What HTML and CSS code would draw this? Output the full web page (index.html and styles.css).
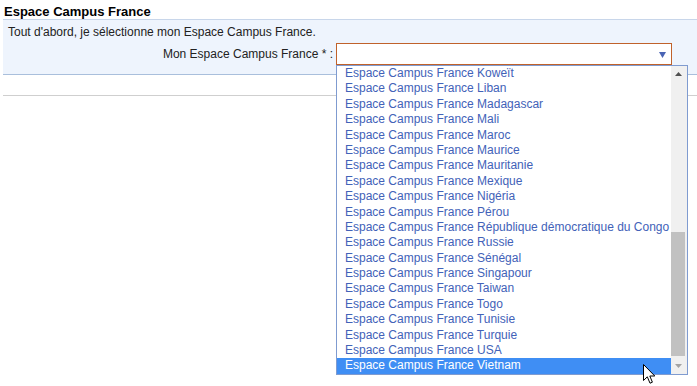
FILE: index.html
```html
<!DOCTYPE html>
<html lang="fr">

<head>
    <meta charset="UTF-8">
    <title>Espace Campus France</title>
    <link rel="stylesheet" href="styles.css">
</head>

<body>
    <div class="page">
        <h1 class="title">Espace Campus France</h1>
        <div class="panel">
            <p class="intro">Tout d'abord, je sélectionne mon Espace Campus France.</p>
            <div class="row">
                <label class="row-label">Mon Espace Campus France * :</label>
                <div class="select-wrap">
                    <div class="select">
                        <svg class="select-arrow" width="7" height="6" viewBox="0 0 7 6">
                            <path d="M0 0 H7 L3.5 6 Z" fill="#4a64b4" />
                        </svg>
                    </div>
                    <div class="listbox">
                        <ul class="options">
                            <li>Espace Campus France Koweït</li>
                            <li>Espace Campus France Liban</li>
                            <li>Espace Campus France Madagascar</li>
                            <li>Espace Campus France Mali</li>
                            <li>Espace Campus France Maroc</li>
                            <li>Espace Campus France Maurice</li>
                            <li>Espace Campus France Mauritanie</li>
                            <li>Espace Campus France Mexique</li>
                            <li>Espace Campus France Nigéria</li>
                            <li>Espace Campus France Pérou</li>
                            <li>Espace Campus France République démocratique du Congo</li>
                            <li>Espace Campus France Russie</li>
                            <li>Espace Campus France Sénégal</li>
                            <li>Espace Campus France Singapour</li>
                            <li>Espace Campus France Taiwan</li>
                            <li>Espace Campus France Togo</li>
                            <li>Espace Campus France Tunisie</li>
                            <li>Espace Campus France Turquie</li>
                            <li>Espace Campus France USA</li>
                            <li class="option-current">Espace Campus France Vietnam</li>
                        </ul>
                        <div class="scrollbar">
                            <div class="scroll-btn">
                                <svg width="7" height="4" viewBox="0 0 7 4"><path d="M0 4 H7 L3.5 0 Z" fill="#505050" /></svg>
                            </div>
                            <div class="scroll-space"></div>
                            <div class="scroll-thumb"></div>
                            <div class="scroll-btn scroll-btn-down">
                                <svg width="7" height="4" viewBox="0 0 7 4"><path d="M0 0 H7 L3.5 4 Z" fill="#a3a3a3" /></svg>
                            </div>
                        </div>
                    </div>
                </div>
            </div>
        </div>
        <div class="sep"></div>
    </div>
    <!-- curseur de la souris -->
    <svg class="cursor" width="13" height="21" viewBox="0 0 13 21">
        <path d="M0.5 0.5 L0.5 16.5 L4.3 12.8 L7 19.2 L9.4 18.2 L6.8 12 L11.8 12 Z" fill="#fff" stroke="#000" stroke-width="1" stroke-linejoin="miter" />
    </svg>
</body>

</html>
```

FILE: styles.css
```css
html,
body {
    height: 100%;
}

body {
    margin: 0;
    font-family: "Liberation Sans", Arial, sans-serif;
    font-size: 12px;
    color: #222;
    background: #fff;
}

.page {
    padding: 4px 0 0 3px;
}

.title {
    margin: 0;
    padding-left: 1px;
    font-size: 13px;
    line-height: 15px;
    font-weight: bold;
    color: #000;
}

.panel {
    background: #eef4fd;
    border-top: 1px solid #c8d6ea;
    border-bottom: 1px solid #a9bfdc;
    padding: 5px 0 9px 5px;
}

.intro {
    margin: 0;
    line-height: 15px;
}

.row {
    display: flex;
    align-items: center;
    gap: 3px;
    margin-top: 3px;
}

.row-label {
    width: 325px;
    text-align: right;
    line-height: 15px;
}

.select-wrap {
    position: relative;
    z-index: 5;
}

.select {
    box-sizing: border-box;
    width: 336px;
    height: 22px;
    border: 1px solid #c0622b;
    background: #fff;
    display: flex;
    align-items: center;
    justify-content: flex-end;
    padding-right: 5px;
}

.select-arrow {
    display: block;
    margin-top: 1px;
}

.listbox {
    position: absolute;
    top: 100%;
    left: 0;
    z-index: 5;
    box-sizing: border-box;
    width: 352px;
    height: 310px;
    border: 1px solid #7f9bd0;
    background: #fff;
    display: flex;
}

.options {
    list-style: none;
    margin: 0;
    padding: 0;
    flex: 1;
    overflow: hidden;
}

.options li {
    height: 15.4px;
    line-height: 15.4px;
    padding-left: 8px;
    white-space: nowrap;
    color: #4262b8;
}

.options .option-current {
    background: #3f8ef4;
    color: #fff;
}

.scrollbar {
    width: 16px;
    background: #f0f0f0;
    display: flex;
    flex-direction: column;
}

.scroll-btn {
    height: 16px;
    display: flex;
    align-items: center;
    justify-content: center;
    padding-right: 2px;
}

.scroll-btn svg {
    display: block;
}

.scroll-btn-down {
    height: 17px;
}

.scroll-space {
    height: 150px;
}

.scroll-thumb {
    height: 124px;
    margin: 0 2px 1px 0;
    background: #c1c1c1;
}

.sep {
    margin-top: 20px;
    border-top: 1px solid #cfcfcf;
}

.cursor {
    position: absolute;
    left: 643px;
    top: 364px;
    z-index: 10;
}
```
